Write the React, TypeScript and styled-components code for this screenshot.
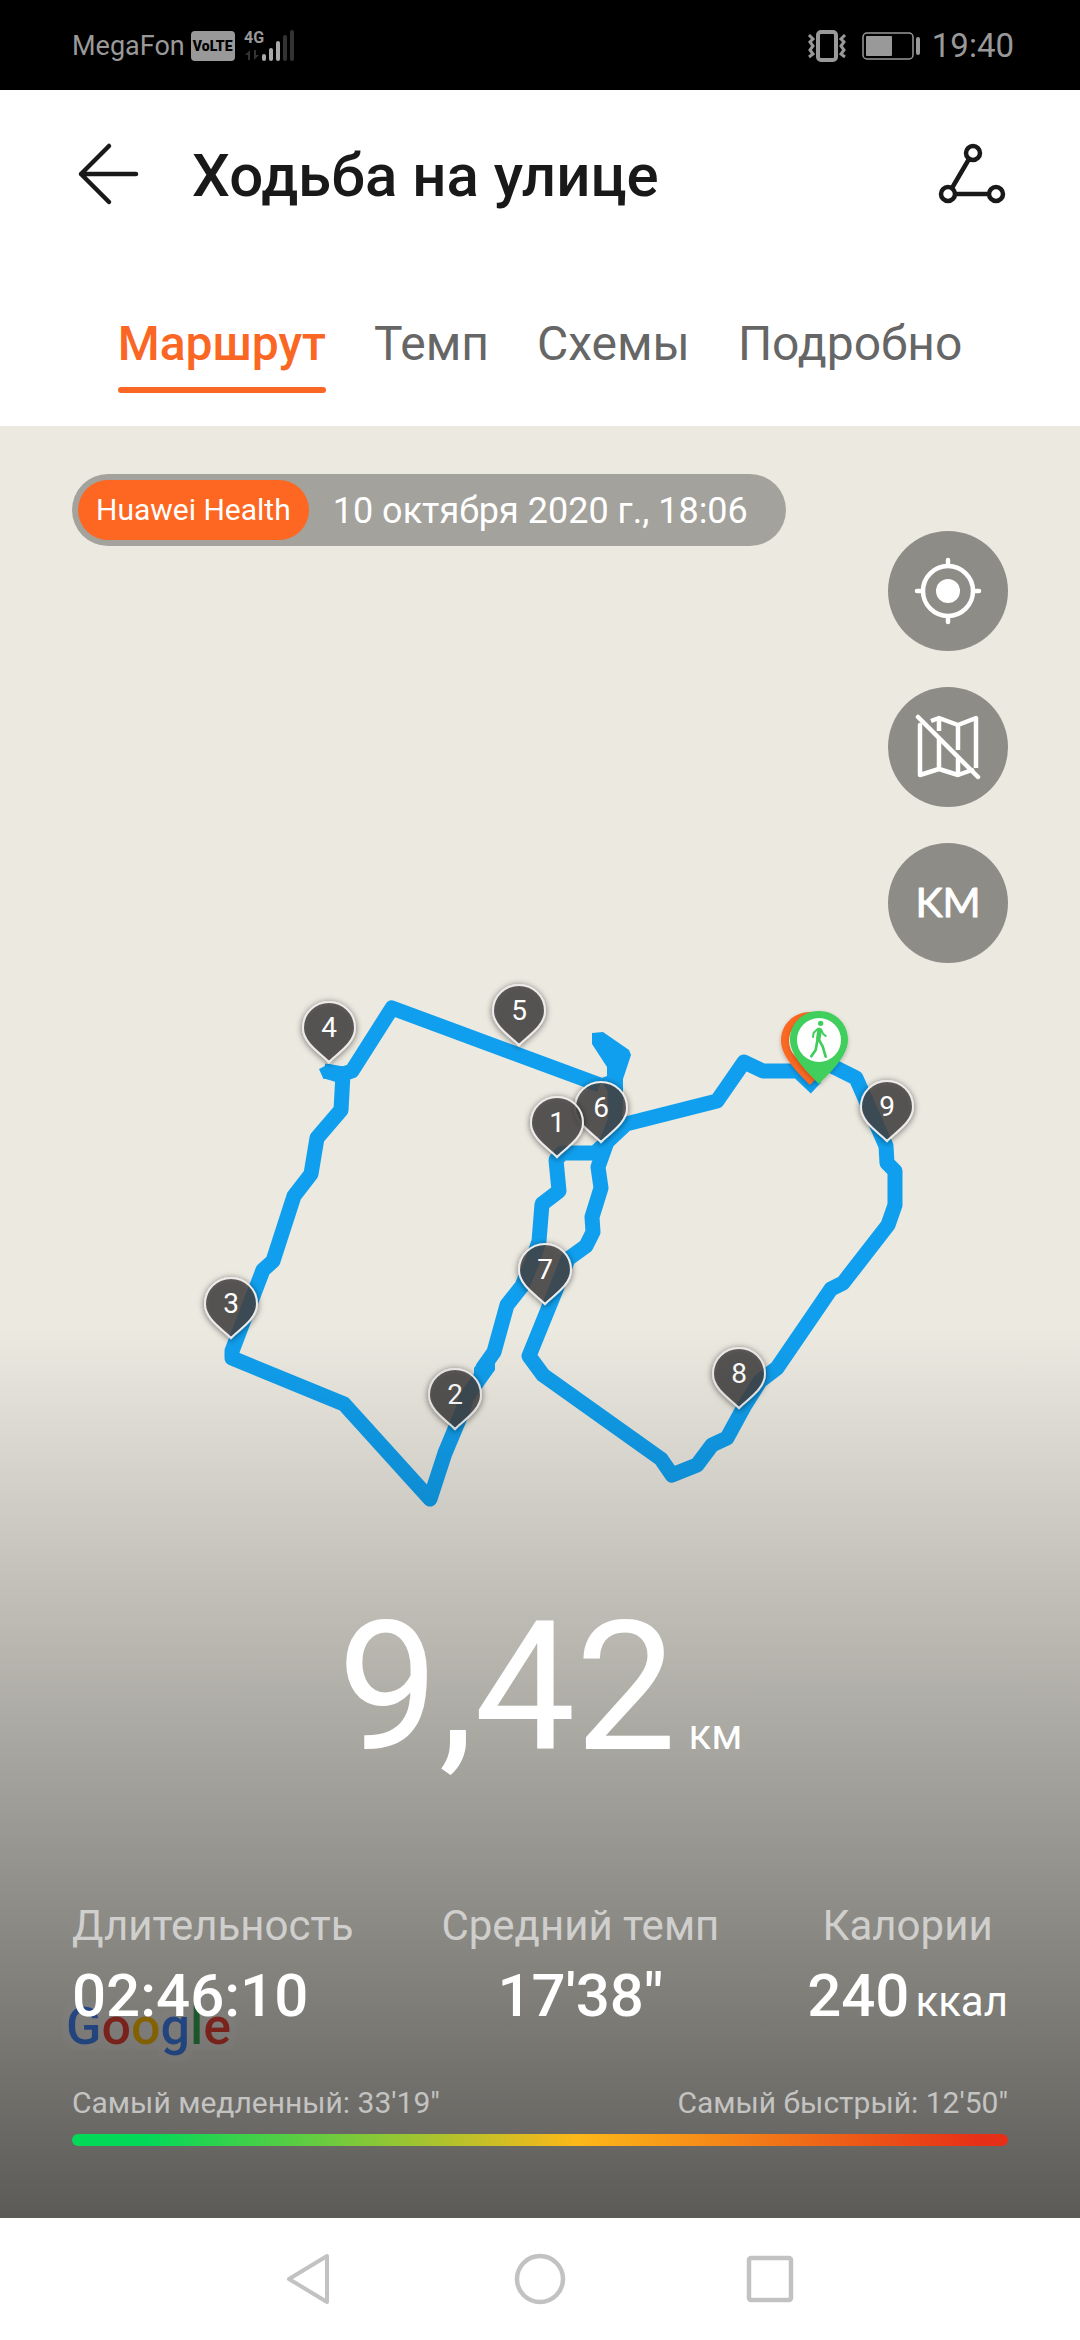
import React from "react";
import styled, { createGlobalStyle } from "styled-components";

const GlobalStyle = createGlobalStyle`
  *, *::before, *::after { box-sizing: border-box; }
  body { margin: 0; background: #fff; font-family: Roboto, "Noto Sans", sans-serif; }
  button { margin: 0; padding: 0; border: 0; background: none; font: inherit; color: inherit; cursor: pointer; }
  svg { display: block; overflow: visible; }
  h1, p, dl, dt, dd { margin: 0; font-weight: inherit; }
`;

const Screen = styled.div`
  display: flex;
  flex-direction: column;
  min-height: 100vh;
`;

/* ---------- Status bar ---------- */

const StatusBar = styled.div`
  display: flex;
  justify-content: space-between;
  align-items: center;
  height: 90px;
  padding: 2px 66px 0 72px;
  background: #000;
  color: #999;
`;

const StatusGroup = styled.div<{ $gap: number }>`
  display: flex;
  align-items: center;
  gap: ${(p) => p.$gap}px;
`;

const Carrier = styled.span`
  font-size: 27px;
  line-height: 32px;
`;

const VolteBadge = styled.span`
  width: 44px;
  height: 30px;
  border-radius: 4px;
  background: #999;
  color: #000;
  font-size: 14px;
  font-weight: 900;
  line-height: 30px;
  text-align: center;
`;

const Clock = styled.span`
  font-size: 33px;
  line-height: 40px;
`;

/* ---------- Header ---------- */

const Header = styled.header`
  display: flex;
  align-items: center;
  gap: 48px;
  height: 168px;
  padding: 0 69px 0 72px;
  color: #191919;
`;

const Title = styled.h1`
  flex: 1;
  padding-top: 4px;
  font-size: 60px;
  font-weight: 500;
  line-height: 72px;
`;

const Tabs = styled.nav`
  display: flex;
  justify-content: center;
  gap: 48px;
  padding: 58px 0 33px;
`;

const Tab = styled.button<{ $active?: boolean }>`
  display: flex;
  flex-direction: column;
  gap: 15px;
  font-size: 48px;
  line-height: 56px;
  font-weight: ${(p) => (p.$active ? 500 : 400)};
  color: ${(p) => (p.$active ? "#fa6724" : "#666")};

  &::after {
    content: "";
    width: 100%;
    height: 6px;
    border-radius: 3px;
    background: ${(p) => (p.$active ? "#fa6724" : "transparent")};
  }
`;

/* ---------- Map ---------- */

const MapArea = styled.main`
  position: relative;
  flex: 1;
  display: flex;
  flex-direction: column;
  justify-content: space-between;
  background: #ebe9e0;
  overflow: hidden;
`;

const RouteCanvas = styled.svg`
  position: absolute;
  inset: 0 0 auto 0;
  width: 100%;
  height: auto;
`;

const MapLogo = styled.svg`
  position: absolute;
  left: 60px;
  bottom: 148px;
`;

const MapTop = styled.div`
  position: relative;
  display: flex;
  justify-content: space-between;
  align-items: flex-start;
  padding: 48px 72px 0;
`;

const DatePill = styled.div`
  display: flex;
  align-items: center;
  gap: 24px;
  padding: 6px 38px 6px 6px;
  border-radius: 36px;
  background: rgba(0, 0, 0, 0.3);
  color: #fff;
`;

const SourceTag = styled.span`
  padding: 0 18px;
  border-radius: 30px;
  background: #fd6721;
  font-size: 30px;
  line-height: 60px;
`;

const DateText = styled.time`
  padding-top: 2px;
  font-size: 36px;
  line-height: 48px;
`;

const MapTools = styled.div`
  display: flex;
  flex-direction: column;
  gap: 36px;
  padding-top: 57px;
`;

const ToolButton = styled.button`
  display: grid;
  place-items: center;
  width: 120px;
  height: 120px;
  border-radius: 50%;
  background: rgba(0, 0, 0, 0.4);
`;

/* ---------- Summary ---------- */

const Summary = styled.section`
  position: relative;
  padding: 270px 72px 72px;
  background: linear-gradient(rgba(0, 0, 0, 0), rgba(0, 0, 0, 0.61));
  color: #fff;
`;

const Distance = styled.p`
  display: flex;
  justify-content: center;
  align-items: baseline;
  gap: 12px;
  font-size: 180px;
  line-height: 180px;
`;

const Unit = styled.span`
  font-size: 42px;
  font-weight: 400;
  line-height: 50px;
`;

const Stats = styled.dl`
  display: flex;
  justify-content: space-between;
  padding-top: 123px;
`;

const Stat = styled.div<{ $centered?: boolean }>`
  display: flex;
  flex-direction: column;
  align-items: ${(p) => (p.$centered ? "center" : "flex-start")};
  gap: 10px;
`;

const StatLabel = styled.dt`
  font-size: 42px;
  line-height: 50px;
  color: rgba(255, 255, 255, 0.6);
`;

const StatValue = styled.dd`
  display: flex;
  align-items: baseline;
  gap: 6px;
  font-size: 60px;
  font-weight: 500;
  line-height: 70px;
`;

const PaceRange = styled.div`
  display: flex;
  justify-content: space-between;
  padding: 54px 0 13px;
  font-size: 30px;
  line-height: 36px;
  color: rgba(255, 255, 255, 0.6);
`;

const PaceBar = styled.div`
  height: 12px;
  border-radius: 6px;
  background: linear-gradient(90deg, #04d859 8%, #fdb819 54%, #e62f17 97%);
`;

/* ---------- System navigation ---------- */

const SystemNav = styled.nav`
  display: flex;
  justify-content: center;
  align-items: center;
  gap: 171px;
  height: 122px;
  background: #fff;
`;

const NavButton = styled.button`
  display: grid;
  place-items: center;
  width: 60px;
  height: 60px;
`;

const ROUTE =
  "M816 1088 L798 1071 L763 1071 L744 1062 L717 1101 L626 1124 L609 1140 L595 1153 L562 1153 " +
  "L556 1160 L559 1191 L542 1204 L539 1241 L532 1262 L522 1286 L507 1305 L494 1352 L482 1369";

const ROUTE_WEST =
  "M487 1363 L487 1368 L466 1398 L463 1410 L445 1453 L430 1499 L344 1404 L232 1358 L232 1351 L263 1270 " +
  "L273 1261 L294 1196 L311 1174 L317 1138 L341 1110 L343 1074 L324 1071 M343 1074 L352 1071 L392 1008 L600 1085";

const ROUTE_EAST =
  "M615 1073 L615 1121 L608 1139 L598 1167 L601 1188 L592 1217 L593 1232 L586 1246 L568 1259 L555 1292 " +
  "L529 1356 L543 1375 L661 1459 L672 1475 L697 1465 L712 1445 L727 1438 L745 1405 L760 1381 L777 1368 " +
  "L831 1289 L843 1283 L888 1225 L895 1205 L895 1171 L887 1163 L886 1146 L856 1078 L834 1067 L815 1056";

const PINS: Array<[string, number, number]> = [
  ["9", 887, 1142],
  ["8", 739, 1409],
  ["7", 545, 1305],
  ["6", 601, 1143],
  ["5", 519, 1046],
  ["4", 329, 1063],
  ["3", 231, 1339],
  ["2", 455, 1430],
  ["1", 557, 1158],
];

const PIN_SHAPE =
  "M0 -1 C-6 -8 -26 -19 -26 -35 C-26 -50 -14 -61 0 -61 C14 -61 26 -50 26 -35 C26 -19 6 -8 0 -1 Z";

const FLAG_SHAPE =
  "M0 0 C-5 -6 -29 -26 -29 -44 C-29 -61 -16 -73 0 -73 C16 -73 29 -61 29 -44 C29 -26 5 -6 0 0 Z";

function Route() {
  return (
    <RouteCanvas viewBox="0 426 1080 1200" role="img" aria-label="Маршрут прогулки">
      <defs>
        <filter id="shadow" x="-30%" y="-30%" width="160%" height="160%">
          <feDropShadow dx="0" dy="1" stdDeviation="3" floodColor="#000" floodOpacity="0.6" />
        </filter>
        <filter id="flagShadow" x="-30%" y="-30%" width="160%" height="160%">
          <feDropShadow dx="0" dy="2" stdDeviation="2" floodColor="#000" floodOpacity="0.25" />
        </filter>
      </defs>
      <g fill="none" stroke="#109fee" strokeWidth="15" strokeLinejoin="round">
        <path d={ROUTE} />
        <path d={ROUTE_WEST} />
        <path d={ROUTE_EAST} />
      </g>
      <path
        d="M319 1069 L329 1064 L345 1068 L342 1084 L323 1078 Z M474 1368 L483 1356 L495 1360 L495 1370 L482 1386 L474 1378 Z"
        fill="#109fee"
      />
      <path
        d="M592 1033 L603 1032 L629 1050 L631 1055 L623 1079 L623 1110 L608 1091 L599 1079 L607 1076 L607 1067 L592 1044 Z"
        fill="#109fee"
      />
      {PINS.map(([label, x, y]) => (
        <g key={label} transform={`translate(${x} ${y})`}>
          <path
            d={PIN_SHAPE}
            fill="rgba(69,67,66,0.78)"
            stroke="#eeeceb"
            strokeWidth="2"
            filter="url(#shadow)"
          />
          <text y="-26" fill="#fff" fontSize="28" textAnchor="middle">
            {label}
          </text>
        </g>
      ))}
      <path d={FLAG_SHAPE} transform="translate(810 1085)" fill="#fa6724" filter="url(#flagShadow)" />
      <circle cx="811" cy="1041" r="22" fill="#fff" />
      <g transform="translate(819 1084)">
        <path d={FLAG_SHAPE} fill="#3fce5b" filter="url(#flagShadow)" />
        <circle cy="-44" r="22" fill="#fff" />
        <g
          transform="translate(-49 -84) scale(0.3333)"
          fill="none"
          stroke="#3fce5b"
          strokeLinecap="round"
          strokeLinejoin="round"
        >
          <circle cx="152" cy="70" r="8" fill="#3fce5b" stroke="none" />
          <path d="M149 90 L145 116" strokeWidth="14" />
          <path d="M144 86 L131 98 L129 111 M154 90 L159 101 L167 108" strokeWidth="6" />
          <path d="M142 122 L137 150 L124 169 M146 118 L158 139 L167 170" strokeWidth="8" />
        </g>
      </g>
    </RouteCanvas>
  );
}

function GoogleLogo() {
  return (
    <MapLogo width="190" height="70" viewBox="0 0 190 70" aria-label="Google">
      <defs>
        <filter id="halo" x="-10%" y="-20%" width="120%" height="140%">
          <feMorphology in="SourceAlpha" operator="dilate" radius="6" result="grown" />
          <feFlood floodColor="#fff" floodOpacity="0.2" />
          <feComposite in2="grown" operator="in" result="outline" />
          <feMerge>
            <feMergeNode in="outline" />
            <feMergeNode in="SourceGraphic" />
          </feMerge>
        </filter>
      </defs>
      <text x="6" y="44" fontSize="52" fontWeight="500" filter="url(#halo)">
        <tspan fill="#4285f4">G</tspan>
        <tspan fill="#ea4335">o</tspan>
        <tspan fill="#fbbc05">o</tspan>
        <tspan fill="#4285f4">g</tspan>
        <tspan fill="#34a853">l</tspan>
        <tspan fill="#ea4335">e</tspan>
      </text>
    </MapLogo>
  );
}

function SignalIcon() {
  return (
    <svg width="50" height="32" viewBox="245 30 50 32" aria-hidden="true">
      <text x="244" y="43" fontSize="16" fontWeight="700" fill="#999">
        4G
      </text>
      <path d="M245 55 L250 50 V60 H248 V55 Z M254 50 V60 L259 55 H256 V50 Z" fill="#333" />
      <g strokeWidth="4" strokeLinecap="round">
        <path d="M264 56 V59 M271 50 V59 M278 43 V59" stroke="#aaa" />
        <path d="M285 37 V59 M292 32 V59" stroke="#333" />
      </g>
    </svg>
  );
}

function VibrateIcon() {
  return (
    <svg width="41" height="34" viewBox="0 0 41 34" fill="none" stroke="#999" aria-hidden="true">
      <rect x="11" y="3" width="18" height="28" rx="3" strokeWidth="4" />
      <path
        d="M2 6 L6 10 L3 13 L6 17 L3 21 L6 25 L2 28 M38 6 L34 10 L37 13 L34 17 L37 21 L34 25 L38 28"
        strokeWidth="3"
      />
    </svg>
  );
}

function BatteryIcon() {
  return (
    <svg width="58" height="28" viewBox="0 0 58 28" aria-hidden="true">
      <rect x="1" y="1" width="50" height="26" rx="4" fill="none" stroke="#999" strokeWidth="1.5" />
      <rect x="4" y="4" width="26" height="20" rx="1" fill="#999" />
      <rect x="54" y="5" width="4" height="18" rx="2" fill="#999" />
    </svg>
  );
}

export default function App() {
  return (
    <Screen>
      <GlobalStyle />
      <StatusBar>
        <StatusGroup $gap={10}>
          <StatusGroup $gap={6}>
            <Carrier>MegaFon</Carrier>
            <VolteBadge>VoLTE</VolteBadge>
          </StatusGroup>
          <SignalIcon />
        </StatusGroup>
        <StatusGroup $gap={12}>
          <StatusGroup $gap={14}>
            <VibrateIcon />
            <BatteryIcon />
          </StatusGroup>
          <Clock>19:40</Clock>
        </StatusGroup>
      </StatusBar>

      <Header>
        <button aria-label="Назад">
          <svg width="72" height="72" viewBox="0 0 72 72" fill="none" stroke="currentColor" strokeWidth="4.5" strokeLinecap="round" strokeLinejoin="round">
            <path d="M37 8 L9 36 L37 64 M9 36 H64" />
          </svg>
        </button>
        <Title>Ходьба на улице</Title>
        <button aria-label="Трек">
          <svg width="72" height="72" viewBox="0 0 72 72" fill="none" stroke="currentColor" strokeWidth="4.5">
            <circle cx="34" cy="15" r="7" />
            <circle cx="9" cy="56" r="7" />
            <circle cx="57" cy="56" r="7" />
            <path d="M30 21 L13 50 M16 56 H50" />
          </svg>
        </button>
      </Header>

      <Tabs>
        <Tab $active aria-current="page">Маршрут</Tab>
        <Tab>Темп</Tab>
        <Tab>Схемы</Tab>
        <Tab>Подробно</Tab>
      </Tabs>

      <MapArea>
        <Route />
        <GoogleLogo />
        <MapTop>
          <DatePill>
            <SourceTag>Huawei Health</SourceTag>
            <DateText dateTime="2020-10-10T18:06">10 октября 2020 г., 18:06</DateText>
          </DatePill>
          <MapTools>
            <ToolButton aria-label="Моё местоположение">
              <svg width="72" height="72" viewBox="0 0 72 72" fill="none" stroke="#fff" strokeWidth="4.5" strokeLinecap="round">
                <circle cx="36" cy="36" r="25" />
                <circle cx="36" cy="36" r="12" fill="#fff" stroke="none" />
                <path d="M36 5 V10 M36 62 V67 M5 36 H10 M62 36 H67" />
              </svg>
            </ToolButton>
            <ToolButton aria-label="Скрыть карту">
              <svg width="72" height="72" viewBox="0 0 72 72" fill="none" stroke="#fff" strokeWidth="4.5" strokeLinecap="round" strokeLinejoin="round">
                <path d="M8 14 V64 L27 58 L46 64 L60 59 M27 28 V58 M46 48 V64" />
                <path d="M19 10 L27 7 L46 14 L64 7 V57 M27 7 V20 M46 14 V39" strokeLinecap="butt" />
                <path d="M6 6 L66 66" />
              </svg>
            </ToolButton>
            <ToolButton aria-label="KM">
              <svg width="72" height="72" viewBox="0 0 72 72" aria-hidden="true">
                <text x="36" y="50" fill="#fff" stroke="#fff" strokeWidth="1" strokeLinejoin="round" fontFamily="Lato, sans-serif" fontSize="41" textAnchor="middle">
                  KM
                </text>
              </svg>
            </ToolButton>
          </MapTools>
        </MapTop>

        <Summary>
          <Distance>
            9,42<Unit>км</Unit>
          </Distance>
          <Stats>
            <Stat>
              <StatLabel>Длительность</StatLabel>
              <StatValue>02:46:10</StatValue>
            </Stat>
            <Stat $centered>
              <StatLabel>Средний темп</StatLabel>
              <StatValue>17'38"</StatValue>
            </Stat>
            <Stat $centered>
              <StatLabel>Калории</StatLabel>
              <StatValue>
                240<Unit>ккал</Unit>
              </StatValue>
            </Stat>
          </Stats>
          <PaceRange>
            <span>Самый медленный: 33'19"</span>
            <span>Самый быстрый: 12'50"</span>
          </PaceRange>
          <PaceBar />
        </Summary>
      </MapArea>

      <SystemNav>
        <NavButton aria-label="Назад">
          <svg width="60" height="60" viewBox="0 0 60 60" fill="none" stroke="#c2c2c2" strokeWidth="4" strokeLinejoin="round">
            <path d="M10 30 L48 7 V53 Z" />
          </svg>
        </NavButton>
        <NavButton aria-label="Главный экран">
          <svg width="60" height="60" viewBox="0 0 60 60" fill="none" stroke="#c2c2c2" strokeWidth="4.5">
            <circle cx="30" cy="30" r="23" />
          </svg>
        </NavButton>
        <NavButton aria-label="Недавние приложения">
          <svg width="60" height="60" viewBox="0 0 60 60" fill="none" stroke="#c2c2c2" strokeWidth="4.5" strokeLinejoin="round">
            <rect x="8" y="9" width="42" height="42" rx="2" />
          </svg>
        </NavButton>
      </SystemNav>
    </Screen>
  );
}
